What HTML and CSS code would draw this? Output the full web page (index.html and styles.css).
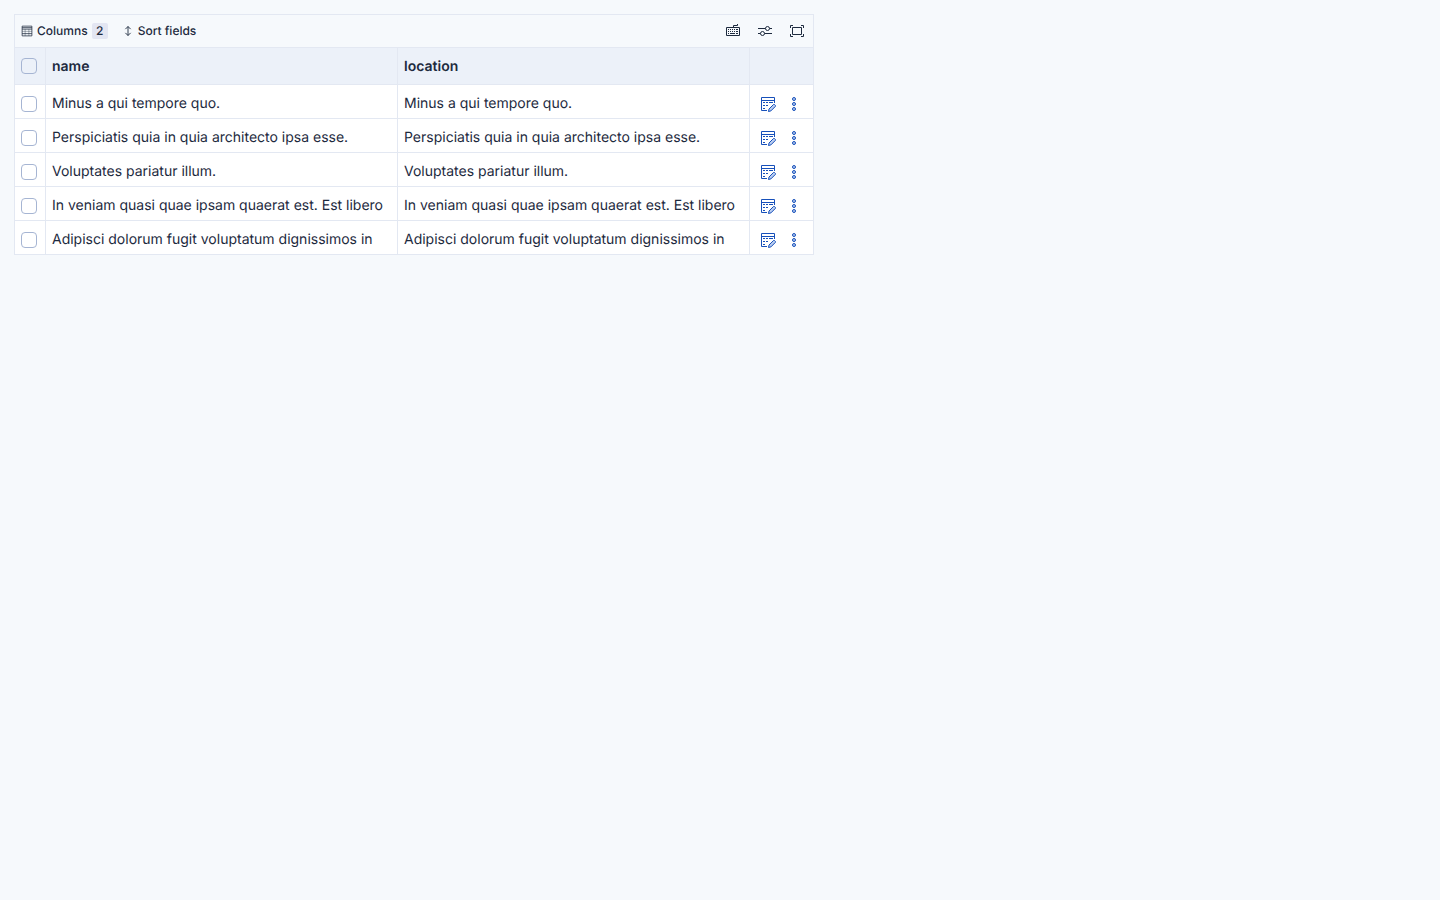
FILE: index.html
```html
<!DOCTYPE html>
<html lang="en">
<head>
  <meta charset="UTF-8">
  <meta name="viewport" content="width=device-width, initial-scale=1.0">
  <title>Data grid</title>
  <link rel="stylesheet" href="styles.css">
</head>
<body>
  <!-- Shared icons -->
  <svg class="sprite" aria-hidden="true">
    <symbol id="icon-edit" viewBox="0 0 16 16">
      <path d="M7 14.500H1.500v-13h13V7M1.500 4.500h13" fill="none" stroke="currentColor"/>
      <path d="M3 6h2v1H3zM6 6h2v1H6zM9 6h4v1H9zM3 9h2v1H3zM6 9h2v1H6zM3 12h2v1H3z" fill="currentColor"/>
      <path d="M8.500 15.500l.5-2.500 4.500-4.500q.5-.5 1 0l.9.900q.5.500 0 1L10.900 14.900z" fill="#b9cdf0" stroke="currentColor"/>
    </symbol>
    <symbol id="icon-more" viewBox="0 0 16 16">
      <g fill="#b9cdf0" stroke="currentColor">
        <circle cx="8" cy="3" r="1.500"/>
        <circle cx="8" cy="8" r="1.500"/>
        <circle cx="8" cy="13" r="1.500"/>
      </g>
    </symbol>
  </svg>

  <div class="grid">
    <div class="toolbar">
      <button class="tool" type="button">
        <svg class="icon-small" viewBox="0 0 16 16" fill="none" stroke="currentColor">
          <path d="M1.500 1.500h13v13h-13zM1.500 3.500h13M1.500 5.500h13M1.500 11.500h13"/>
          <path d="M5.500 5.500v9M10.500 5.500v9M1.500 8.500h13" stroke-opacity=".5"/>
        </svg>
        Columns
        <span class="badge">2</span>
      </button>
      <button class="tool" type="button">
        <svg class="icon-small" viewBox="0 0 16 16" fill="none" stroke="currentColor" stroke-width="1.200">
          <path d="M8 2v12M4.500 5.500L8 2l3.500 3.500M4.500 10.500L8 14l3.500-3.500"/>
        </svg>
        Sort fields
      </button>

      <div class="toolbar-right">
        <button class="icon-button" type="button" aria-label="Keyboard shortcuts">
          <svg class="icon" viewBox="0 0 16 16">
            <path d="M1.500 4.500h13v8h-13zM8.500 4.500v-2h4V1" fill="none" stroke="currentColor"/>
            <path d="M3 6h1v1H3zM5 6h1v1H5zM7 6h1v1H7zM9 6h1v1H9zM11 6h2v1h-2zM3 8h1v1H3zM5 8h1v1H5zM7 8h1v1H7zM9 8h1v1H9zM11 8h2v1h-2zM3 10h1v1H3zM5 10h5v1H5zM11 10h2v1h-2z" fill="currentColor"/>
          </svg>
        </button>
        <button class="icon-button" type="button" aria-label="Display options">
          <svg class="icon" viewBox="0 0 16 16" fill="none" stroke="currentColor">
            <path d="M1 5.500h7.500M12.500 5.500H15M1 10.500h2.500M7.500 10.500H15"/>
            <circle cx="10.500" cy="5.500" r="2"/>
            <circle cx="5.500" cy="10.500" r="2"/>
          </svg>
        </button>
        <button class="icon-button" type="button" aria-label="Enter fullscreen">
          <svg class="icon" viewBox="0 0 16 16" fill="none" stroke="currentColor">
            <path d="M1.500 5V2.500H4M12 2.500h2.500V5M14.500 11v2.500H12M4 13.500H1.500V11M3.500 4.500h9v7h-9z"/>
          </svg>
        </button>
      </div>
    </div>

    <table class="table">
      <colgroup>
        <col class="col-select">
        <col>
        <col>
        <col class="col-actions">
      </colgroup>
      <thead>
        <tr>
          <th class="control"><input type="checkbox" aria-label="Select all rows"></th>
          <th>name</th>
          <th>location</th>
          <th></th>
        </tr>
      </thead>
      <tbody>
        <tr>
          <td class="control"><input type="checkbox" aria-label="Select row 1"></td>
          <td>Minus a qui tempore quo.</td>
          <td>Minus a qui tempore quo.</td>
          <td><div class="actions">
            <button class="icon-button" type="button" aria-label="Edit"><svg class="icon"><use href="#icon-edit"/></svg></button>
            <button class="icon-button" type="button" aria-label="More actions"><svg class="icon"><use href="#icon-more"/></svg></button>
          </div></td>
        </tr>
        <tr>
          <td class="control"><input type="checkbox" aria-label="Select row 2"></td>
          <td>Perspiciatis quia in quia architecto ipsa esse.</td>
          <td>Perspiciatis quia in quia architecto ipsa esse.</td>
          <td><div class="actions">
            <button class="icon-button" type="button" aria-label="Edit"><svg class="icon"><use href="#icon-edit"/></svg></button>
            <button class="icon-button" type="button" aria-label="More actions"><svg class="icon"><use href="#icon-more"/></svg></button>
          </div></td>
        </tr>
        <tr>
          <td class="control"><input type="checkbox" aria-label="Select row 3"></td>
          <td>Voluptates pariatur illum.</td>
          <td>Voluptates pariatur illum.</td>
          <td><div class="actions">
            <button class="icon-button" type="button" aria-label="Edit"><svg class="icon"><use href="#icon-edit"/></svg></button>
            <button class="icon-button" type="button" aria-label="More actions"><svg class="icon"><use href="#icon-more"/></svg></button>
          </div></td>
        </tr>
        <tr>
          <td class="control"><input type="checkbox" aria-label="Select row 4"></td>
          <td>In veniam quasi quae ipsam quaerat est. Est libero</td>
          <td>In veniam quasi quae ipsam quaerat est. Est libero</td>
          <td><div class="actions">
            <button class="icon-button" type="button" aria-label="Edit"><svg class="icon"><use href="#icon-edit"/></svg></button>
            <button class="icon-button" type="button" aria-label="More actions"><svg class="icon"><use href="#icon-more"/></svg></button>
          </div></td>
        </tr>
        <tr>
          <td class="control"><input type="checkbox" aria-label="Select row 5"></td>
          <td>Adipisci dolorum fugit voluptatum dignissimos in</td>
          <td>Adipisci dolorum fugit voluptatum dignissimos in</td>
          <td><div class="actions">
            <button class="icon-button" type="button" aria-label="Edit"><svg class="icon"><use href="#icon-edit"/></svg></button>
            <button class="icon-button" type="button" aria-label="More actions"><svg class="icon"><use href="#icon-more"/></svg></button>
          </div></td>
        </tr>
      </tbody>
    </table>
  </div>
</body>
</html>
```
FILE: styles.css
```css
* {
  box-sizing: border-box;
}

body {
  margin: 0;
  padding: 14px;
  background: #f6f9fc;
  color: #1d2a3e;
  font-family: Inter, sans-serif;
  font-size: 14px;
  text-rendering: geometricPrecision;
}

button {
  margin: 0;
  border: none;
  background: none;
  color: inherit;
  font-family: inherit;
  text-rendering: inherit;
  cursor: pointer;
}

.sprite {
  display: none;
}

.grid {
  max-width: 800px;
  border: 1px solid #e3e8f2;
  border-bottom: none;
}

/* Toolbar */
.toolbar {
  display: flex;
  align-items: center;
  gap: 2px;
  padding: 4px 4px 4px 0;
}

.tool {
  display: flex;
  align-items: center;
  gap: 4px;
  height: 24px;
  padding: 0 6px;
  font-size: 12px;
  font-weight: 450;
  line-height: 16px;
}

.badge {
  width: 16px;
  border-radius: 2px;
  background: #e3e6f2;
  text-align: center;
}

.toolbar-right {
  display: flex;
  gap: 8px;
  margin-left: auto;
}

.icon-button {
  display: flex;
  align-items: center;
  justify-content: center;
  width: 24px;
  height: 24px;
  padding: 0;
}

.icon {
  width: 16px;
  height: 16px;
}

.icon-small {
  width: 12px;
  height: 12px;
}

/* Table */
.table {
  width: 100%;
  table-layout: fixed;
  border-collapse: separate;
  border-spacing: 0;
}

.col-select {
  width: 31px;
}

.col-actions {
  width: 63px;
}

th,
td {
  border-right: 1px solid #e3e8f2;
  border-bottom: 1px solid #e3e8f2;
  line-height: 24px;
  text-align: left;
  white-space: nowrap;
  overflow: hidden;
}

th:last-child,
td:last-child {
  border-right: none;
}

th {
  height: 38px;
  padding: 7px 6px 5px;
  border-top: 1px solid #e3e8f2;
  background: #ecf1f9;
  font-weight: 600;
}

td {
  height: 34px;
  padding: 7px 6px 2px;
  background: #fff;
  vertical-align: top;
}

input[type="checkbox"] {
  appearance: none;
  display: block;
  width: 16px;
  height: 16px;
  margin: 0;
  border: 1px solid #a6b5d3;
  border-radius: 4px;
}

th.control {
  padding: 6px;
}

td.control {
  padding-top: 11px;
}

.actions {
  display: flex;
  gap: 2px;
  color: #1750ba;
}
```
